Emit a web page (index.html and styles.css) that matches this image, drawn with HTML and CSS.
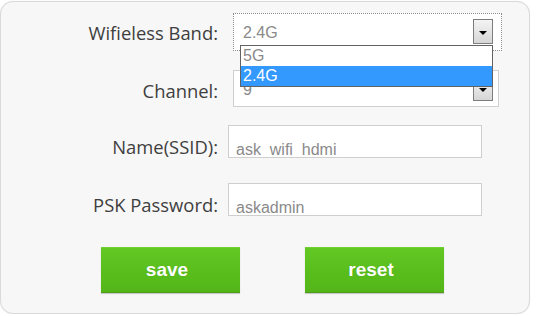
FILE: index.html
```html
<!DOCTYPE html>
<html>
<head>
<meta charset="utf-8">
<link rel="stylesheet" href="styles.css">
</head>
<body>
<div class="panel">
  <form class="form">
    <label class="lbl r1">Wifieless Band:</label>
    <div class="ctl">
      <div class="select focus">
        <span class="val">2.4G</span>
        <span class="arrow"><i class="tri"></i></span>
        <ul class="list">
          <li class="opt">5G</li>
          <li class="opt sel">2.4G</li>
        </ul>
      </div>
    </div>

    <label class="lbl r2">Channel:</label>
    <div class="ctl">
      <div class="select plain">
        <span class="val">9</span>
        <span class="arrow"><i class="tri"></i></span>
      </div>
    </div>

    <label class="lbl r3">Name(SSID):</label>
    <div class="ctl"><div class="field">ask_wifi_hdmi</div></div>

    <label class="lbl r4">PSK Password:</label>
    <div class="ctl"><div class="field">askadmin</div></div>

    <div class="actions">
      <button type="button" class="btn">save</button>
      <button type="button" class="btn">reset</button>
    </div>
  </form>
</div>
</body>
</html>
```

FILE: styles.css
```css
html, body {
  margin: 0;
  padding: 0;
  background: #ffffff;
}

.panel {
  box-sizing: border-box;
  width: 530px;
  height: 313px;
  margin-top: 1px;
  background: #f7f7f7;
  border: 1px solid #dadada;
  border-radius: 13px;
  box-shadow: 0 0 1px #e2e2e2;
  padding-top: 11px;
}

.form {
  display: grid;
  grid-template-columns: 217px 1fr;
  grid-template-rows: 57px 55px 58px 64px 46px;
  column-gap: 10px;
  margin: 0;
}

.lbl {
  font-family: "Open Sans", "Noto Sans", sans-serif;
  font-size: 18.4px;
  line-height: 24px;
  color: #3e3e3e;
  text-align: right;
  white-space: nowrap;
}
.r1 { margin-top: 8px; }
.r2 { margin-top: 9px; }
.r3 { margin-top: 10px; }
.r4 { margin-top: 10px; }

.ctl {
  display: flex;
  align-items: flex-start;
}

.select {
  position: relative;
  box-sizing: border-box;
  display: flex;
  align-items: flex-start;
  margin-left: 5px;
  background: #ffffff;
  font-family: "Liberation Sans", Arial, sans-serif;
  font-size: 16px;
  line-height: 16px;
  color: #8a8a8a;
}
.select.focus {
  width: 269px;
  height: 38px;
  border: 1px dotted #8c8c8c;
  z-index: 2;
}
.select.plain {
  width: 266px;
  height: 37px;
  border: 1px solid #d0d0d0;
}

.val {
  flex: 1;
  padding: 11px 0 0 9px;
}

.arrow {
  box-sizing: border-box;
  width: 20px;
  height: 25px;
  margin-top: 5px;
  border: 1px solid #7d7d7d;
  background: linear-gradient(#f4f4f4, #d6d6d6);
  display: flex;
  align-items: center;
  justify-content: center;
}
.select.focus .arrow { margin-right: 8px; }
.select.plain .arrow { margin-right: 5px; }

.tri {
  width: 0;
  height: 0;
  margin-top: 2px;
  border-left: 4px solid transparent;
  border-right: 4px solid transparent;
  border-top: 4px solid #000000;
}

.list {
  position: absolute;
  left: 6px;
  top: 31px;
  box-sizing: border-box;
  width: 253px;
  margin: 0;
  padding: 0;
  list-style: none;
  background: #ffffff;
  border: 1px solid #636363;
}

.opt {
  height: 20px;
  line-height: 20px;
  padding-left: 2px;
  color: #8a8a8a;
}
.opt.sel {
  background: #3399ff;
  color: #ffffff;
}

.field {
  box-sizing: border-box;
  width: 254px;
  height: 33px;
  overflow: hidden;
  background: #ffffff;
  border: 1px solid #cfcfcf;
  padding: 16px 0 0 7px;
  font-family: "Liberation Sans", Arial, sans-serif;
  font-size: 16px;
  line-height: 16px;
  color: #8a8a8a;
  white-space: nowrap;
}

.actions {
  grid-column: 1 / -1;
  display: flex;
  gap: 65px;
  padding-left: 100px;
}

.btn {
  box-sizing: border-box;
  width: 139px;
  height: 46px;
  margin: 0;
  padding: 0 7px 0 0;
  border: none;
  border-top: 1px solid #6fd031;
  border-bottom: 1px solid #4c9c1a;
  background: linear-gradient(#63c824, #58bd1b 60%, #54b519);
  box-shadow: 0 1px 1px rgba(0, 0, 0, 0.18);
  color: #ffffff;
  font-family: "Liberation Sans", Arial, sans-serif;
  font-weight: bold;
  font-size: 19px;
  line-height: 44px;
  text-shadow: 0 0 1px rgba(0, 0, 0, 0.15);
}
```
